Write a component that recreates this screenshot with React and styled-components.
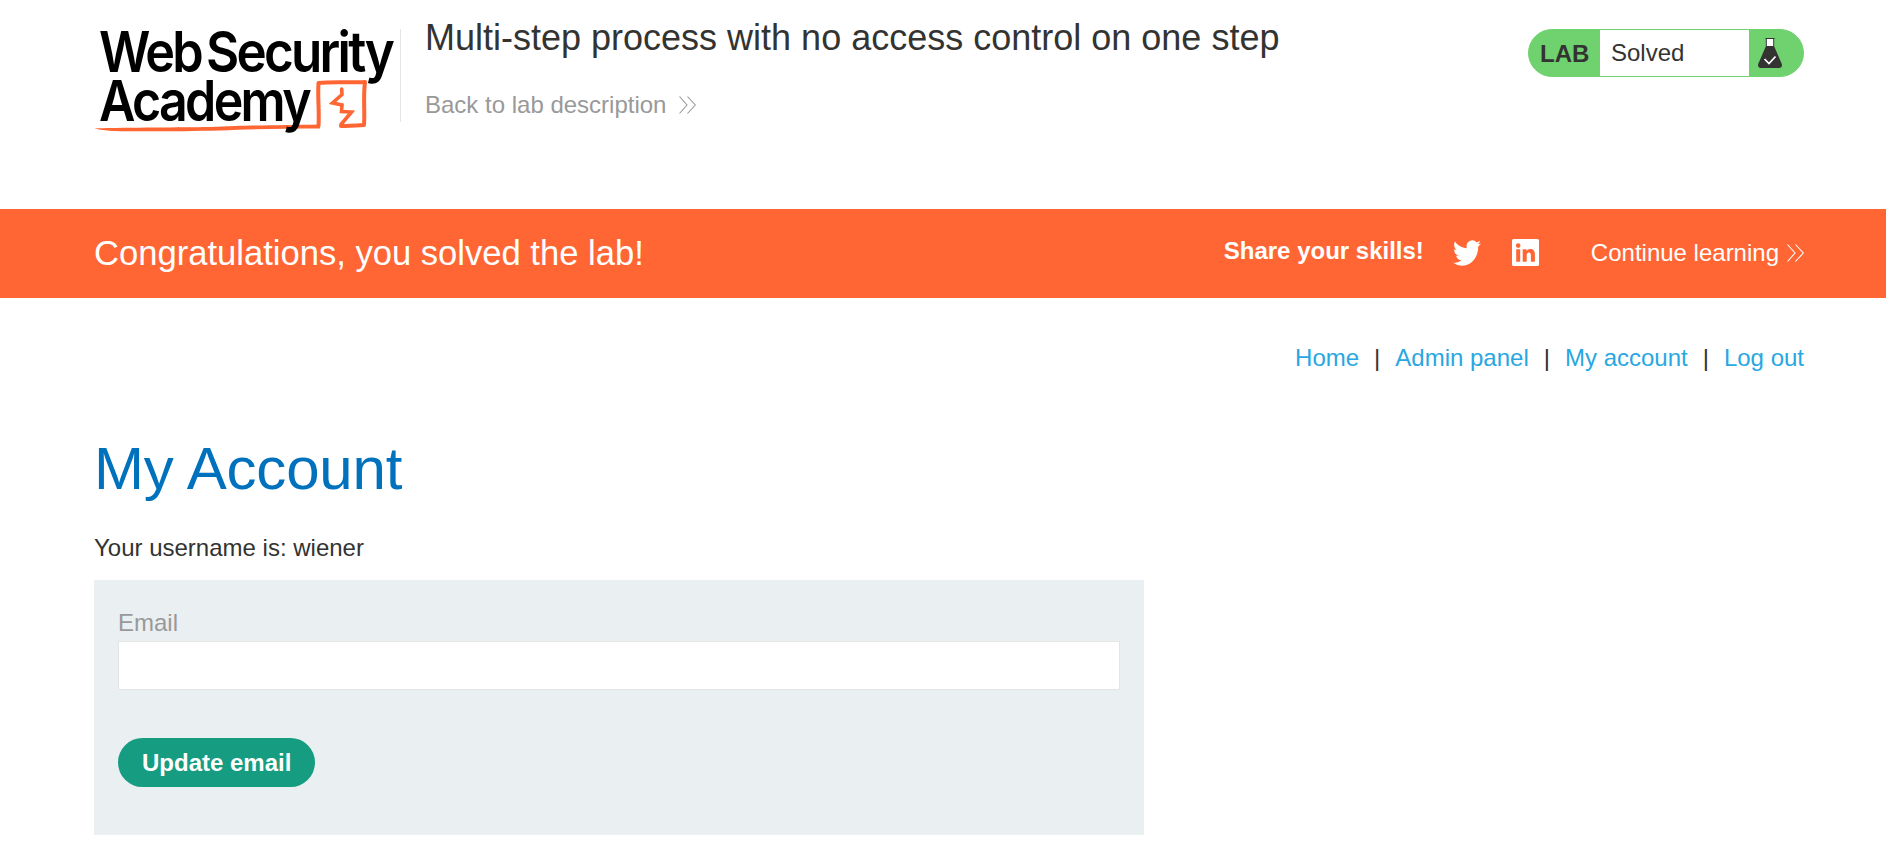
import React from "react";
import styled, { createGlobalStyle } from "styled-components";

const GlobalStyle = createGlobalStyle`
  *, *::before, *::after { box-sizing: border-box; }
  body {
    margin: 0;
    background: #fff;
    color: #333332;
    font-family: "Liberation Sans", Arial, sans-serif;
    font-size: 24px;
    line-height: 28px;
  }
  h1, h2, h4, p { margin: 0; font-weight: 400; }
  a { text-decoration: none; }
`;

const Page = styled.div`
  min-height: 844px;
`;

const Header = styled.header`
  display: flex;
  align-items: flex-start;
  height: 209px;
  padding: 0 82px 0 94px;
`;

const LogoLink = styled.a`
  display: block;
  width: 306px;
  height: 140px;
  svg { display: block; overflow: visible; }
`;

const TitleBlock = styled.div`
  flex: 1;
  margin-top: 29px;
  height: 93px;
  padding-left: 24px;
  border-left: 1px solid #e4e4e4;
`;

const Title = styled.h2`
  font-size: 36px;
  line-height: 40px;
  margin-top: -11px;
  white-space: nowrap;
`;

const BackLink = styled.a`
  display: inline-flex;
  align-items: center;
  gap: 13px;
  margin-top: 33px;
  color: #999;
`;

const Status = styled.div`
  display: flex;
  width: 276px;
  height: 48px;
  margin-top: 29px;
  border: 1px solid #70d26e;
  border-radius: 24px;
  overflow: hidden;
  background: #70d26e;
  line-height: 46px;
`;

const StatusTag = styled.span`
  width: 71px;
  padding-left: 11px;
  font-weight: 700;
  line-height: 48px;
`;

const StatusText = styled.span`
  width: 149px;
  padding-left: 11px;
  background: #fff;
`;

const Flask = styled.svg`
  margin: 7px 0 0 9px;
`;

const Banner = styled.section`
  display: flex;
  align-items: center;
  height: 89px;
  padding: 0 82px 2px 94px;
  background: #ff6633;
  color: #fff;
`;

const BannerTitle = styled.h4`
  flex: 1;
  font-size: 34.6px;
  line-height: 40px;
`;

const Share = styled.span`
  margin: -4px 29px 0 0;
  font-weight: 700;
`;

const SocialIcon = styled.svg`
  margin-right: ${(p) => p.$gap}px;
`;

const Continue = styled.a`
  display: flex;
  align-items: center;
  gap: 8px;
  color: #fff;
`;

const Main = styled.main`
  padding: 46px 82px 0 94px;
`;

const Nav = styled.nav`
  display: flex;
  justify-content: flex-end;
  gap: 15px;
`;

const NavLink = styled.a`
  color: #29a7e1;
`;

const Heading = styled.h1`
  margin-top: 62px;
  color: #0071bc;
  font-size: 60px;
  letter-spacing: -0.2px;
  line-height: 70px;
`;

const Username = styled.p`
  margin-top: 30px;
`;

const Form = styled.form`
  width: 1050px;
  height: 255px;
  margin-top: 18px;
  padding: 29px 24px 0;
  background: #eaeff2;
`;

const Label = styled.label`
  display: block;
  color: #999;
`;

const Input = styled.input`
  display: block;
  width: 1002px;
  height: 49px;
  margin-top: 4px;
  padding: 0 12px;
  border: 1px solid #e4e4e4;
  border-radius: 0;
  background: #fff;
  font: inherit;
  outline: none;
`;

const Button = styled.button`
  height: 49px;
  margin-top: 48px;
  padding: 0 24px;
  border: 0;
  border-radius: 25px;
  background: #169c80;
  color: #fff;
  font: inherit;
  font-weight: 700;
`;

const Wordmark = styled.text`
  font-family: Inter, Roboto, sans-serif;
  font-size: 56px;
  font-weight: 600;
  letter-spacing: -3px;
`;

const Logo = () => (
  <svg width="306" height="140" viewBox="94 0 306 140">
    <path d="M94.500 128.300 C130 127.500 180 127.500 210 127 C255 125 280 125.500 320 124.500 L320 128.500 C285 128.500 250 129 220 130.500 C180 131.500 135 131.500 112 131 C107 130.500 98 130 94.500 128.300Z" fill="#ff6633" />
    <g fill="none" stroke="#ff6633" strokeWidth="4" strokeLinejoin="round" strokeLinecap="round">
      <path d="M318.500 126 C319.500 110 317.500 100 318.500 83 C334 81.500 350 83 365 82 C363 98 365 110 364 125 C356 125.500 348 126 341 126" />
      <path strokeWidth="3.600" strokeLinejoin="miter" d="M341.700 89 L342 94.500 L332.500 103 L342 105 L341.500 111.500 L351.500 112 L341 124.500" />
    </g>
    <Wordmark x="99" y="72" textLength="102" lengthAdjust="spacingAndGlyphs">Web</Wordmark>
    <Wordmark x="206" y="72" textLength="186" lengthAdjust="spacingAndGlyphs">Security</Wordmark>
    <Wordmark x="99" y="120.500" textLength="210" lengthAdjust="spacingAndGlyphs">Academy</Wordmark>
  </svg>
);

const Chevrons = () => (
  <svg width="17" height="18" viewBox="0 0 17 18" fill="none" stroke="currentColor" strokeWidth="1.1">
    <path d="M0.500 0.500 L8 9 L0.500 17.500 M8.500 0.500 L16.300 9 L8.500 17.500" />
  </svg>
);

export default function App() {
  return (
    <Page>
      <GlobalStyle />
      <Header>
        <LogoLink href="#"><Logo /></LogoLink>
        <TitleBlock>
          <Title>Multi-step process with no access control on one step</Title>
          <BackLink href="#">Back to lab description <Chevrons /></BackLink>
        </TitleBlock>
        <Status>
          <StatusTag>LAB</StatusTag>
          <StatusText>Solved</StatusText>
          <Flask width="24" height="32" viewBox="0 0 24 32">
            <path d="M8 2 H16 V9 H8Z" fill="#fff" />
            <path d="M7.500 1.500 H16.500 M8.300 1.500 V9 M15.700 1.500 V9" stroke="#333332" strokeWidth="1" fill="none" />
            <path d="M8 9 H16 L23.800 27 Q24.500 31 21 31 H3 Q-.5 31 .2 27Z" fill="#333332" />
            <path d="M6.500 22 L11 26.500 L17.500 19.500" fill="none" stroke="#fff" strokeWidth="1.700" />
          </Flask>
        </Status>
      </Header>
      <Banner>
        <BannerTitle>Congratulations, you solved the lab!</BannerTitle>
        <Share>Share your skills!</Share>
        <SocialIcon $gap={31} width="28" height="26" viewBox="0 2 24 20" preserveAspectRatio="none" fill="#fff">
          <path d="M23.953 4.570a10 10 0 01-2.825.775 4.958 4.958 0 002.163-2.723c-.951.555-2.005.959-3.127 1.184a4.920 4.920 0 00-8.384 4.482C7.690 8.095 4.067 6.130 1.640 3.162a4.822 4.822 0 00-.666 2.475c0 1.710.87 3.213 2.188 4.096a4.904 4.904 0 01-2.228-.616v.06a4.923 4.923 0 003.946 4.827 4.996 4.996 0 01-2.212.085 4.936 4.936 0 004.604 3.417 9.867 9.867 0 01-6.102 2.105c-.39 0-.779-.023-1.170-.067a13.995 13.995 0 007.557 2.209c9.053 0 13.998-7.496 13.998-13.985 0-.21 0-.42-.015-.63A9.935 9.935 0 0024 4.590z" />
        </SocialIcon>
        <SocialIcon $gap={52} width="27" height="27" viewBox="0 0 27 27">
          <rect width="27" height="27" rx="1.500" fill="#fff" />
          <g fill="#ff6633">
            <circle cx="6.200" cy="6.600" r="2.300" />
            <path d="M4.200 10.300 H8.200 V22.700 H4.200Z M10.700 10.300 H14.500 V12 C15.300 10.700 16.600 10 18.300 10 C21.800 10 22.900 12.300 22.900 15.700 V22.700 H18.900 V16.500 C18.900 14.700 18.600 13.400 16.900 13.400 C15.200 13.400 14.700 14.700 14.700 16.500 V22.700 H10.700Z" />
          </g>
        </SocialIcon>
        <Continue href="#">Continue learning <Chevrons /></Continue>
      </Banner>
      <Main>
        <Nav>
          <NavLink href="#">Home</NavLink><span>|</span>
          <NavLink href="#">Admin panel</NavLink><span>|</span>
          <NavLink href="#">My account</NavLink><span>|</span>
          <NavLink href="#">Log out</NavLink>
        </Nav>
        <Heading>My Account</Heading>
        <Username>Your username is: wiener</Username>
        <Form onSubmit={(e) => e.preventDefault()}>
          <Label htmlFor="email">Email</Label>
          <Input id="email" type="email" />
          <Button type="submit">Update email</Button>
        </Form>
      </Main>
    </Page>
  );
}
